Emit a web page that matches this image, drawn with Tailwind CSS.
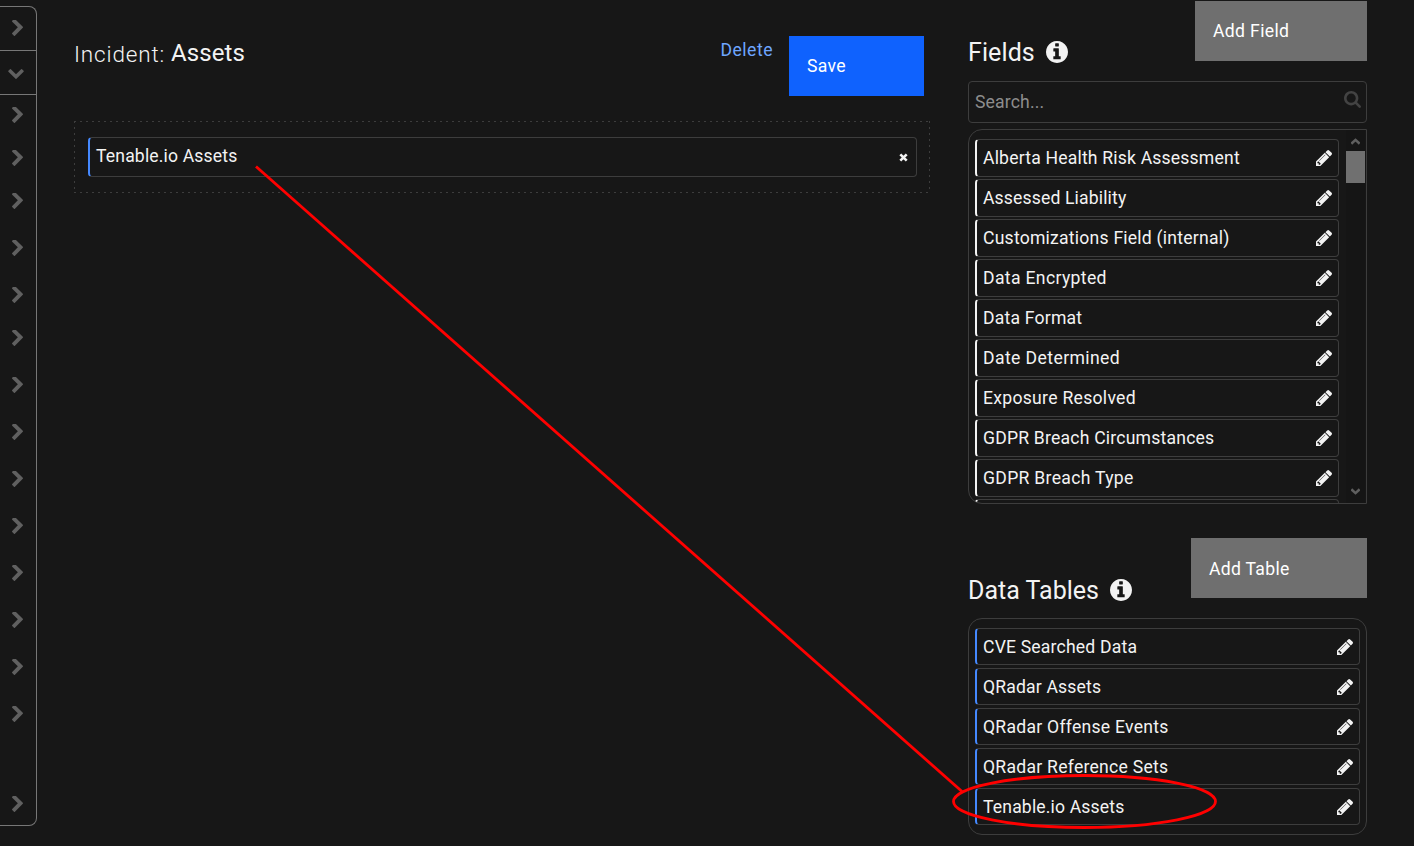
<!DOCTYPE html>
<html lang="en">
<head>
<meta charset="utf-8">
<title>Incident: Assets</title>
<script src="https://cdn.jsdelivr.net/npm/@tailwindcss/browser@4"></script>
</head>
<body class="relative h-[846px] w-[1414px] overflow-hidden bg-[#171717] font-['Roboto','Liberation_Sans',sans-serif] text-[17.6px] leading-6 text-[#f3f3f3]">
<svg class="hidden">
  <symbol id="right" viewBox="346 154 1036 1484"><path d="M1363 877l-742 742q-19 19-45 19t-45-19l-166-166q-19-19-19-45t19-45l531-531-531-531q-19-19-19-45t19-45l166-166q19-19 45-19t45 19l742 742q19 19 19 45t-19 45z"/></symbol>
  <symbol id="down" viewBox="90 533 1612 1035"><path d="M1683 808l-742 741q-19 19-45 19t-45-19l-742-741q-19-19-19-45.500t19-45.500l166-165q19-19 45-19t45 19l531 531 531-531q19-19 45-19t45 19l166 165q19 19 19 45.500t-19 45.500z"/></symbol>
  <symbol id="pencil" viewBox="128 149 1515 1515"><path d="M491 1536l91-91-235-235-91 91v107h128v128h107zm523-928q0-22-22-22-10 0-17 7l-542 542q-7 7-7 17 0 22 22 22 10 0 17-7l542-542q7-7 7-17zm-54-192l416 416-832 832h-416v-416zm683 96q0 53-37 90l-166 166-416-416 166-165q36-38 90-38 53 0 91 38l235 234q37 39 37 91z"/></symbol>
  <symbol id="info" viewBox="128 128 1536 1536"><path d="M1152 1376v-160q0-14-9-23t-23-9h-96v-512q0-14-9-23t-23-9h-320q-14 0-23 9t-9 23v160q0 14 9 23t23 9h96v320h-96q-14 0-23 9t-9 23v160q0 14 9 23t23 9h448q14 0 23-9t9-23zm-128-896v-160q0-14-9-23t-23-9h-192q-14 0-23 9t-9 23v160q0 14 9 23t23 9h192q14 0 23-9t9-23zm640 416q0 209-103 385.500t-279.500 279.500-385.500 103-385.500-103-279.500-279.500-103-385.500 103-385.500 279.500-279.500 385.500-103 385.500 103 279.500 279.500 103 385.500z"/></symbol>
  <symbol id="search" viewBox="64 128 1664 1664"><path d="M1216 832q0-185-131.500-316.500t-316.500-131.500-316.500 131.500-131.500 316.500 131.500 316.500 316.500 131.500 316.500-131.500 131.500-316.500zm512 832q0 52-38 90t-90 38q-54 0-90-38l-343-342q-179 124-399 124-143 0-273.500-55.500t-225-150-150-225-55.500-273.500 55.500-273.500 150-225 225-150 273.500-55.500 273.500 55.500 225 150 150 225 55.500 273.500q0 220-124 399l343 343q37 37 37 90z"/></symbol>
</svg>
<div class="flex h-full">
  <nav class="mt-1.5 flex h-[820px] w-[37px] shrink-0 flex-col rounded-r-lg border-y border-r border-[#777] fill-[#606060]">
    <div class="h-11 shrink-0 border-b border-[#777] pt-[13px] pl-3"><svg class="h-4 w-[11px]"><use href="#right"/></svg></div>
    <div class="h-11 shrink-0 border-b border-[#777] pt-[18px] pl-2"><svg class="h-2.5 w-4"><use href="#down"/></svg></div>
    <div class="flex flex-col pt-3 pl-3">
      <svg class="h-4 w-[11px]"><use href="#right"/></svg>
      <svg class="mt-[27px] h-4 w-[11px]"><use href="#right"/></svg>
      <svg class="mt-[27px] h-4 w-[11px]"><use href="#right"/></svg>
      <svg class="mt-[31px] h-4 w-[11px]"><use href="#right"/></svg>
      <svg class="mt-[31px] h-4 w-[11px]"><use href="#right"/></svg>
      <svg class="mt-[27px] h-4 w-[11px]"><use href="#right"/></svg>
      <svg class="mt-[31px] h-4 w-[11px]"><use href="#right"/></svg>
      <svg class="mt-[31px] h-4 w-[11px]"><use href="#right"/></svg>
      <svg class="mt-[31px] h-4 w-[11px]"><use href="#right"/></svg>
      <svg class="mt-[31px] h-4 w-[11px]"><use href="#right"/></svg>
      <svg class="mt-[31px] h-4 w-[11px]"><use href="#right"/></svg>
      <svg class="mt-[31px] h-4 w-[11px]"><use href="#right"/></svg>
      <svg class="mt-[31px] h-4 w-[11px]"><use href="#right"/></svg>
      <svg class="mt-[31px] h-4 w-[11px]"><use href="#right"/></svg>
      <svg class="mt-[74px] h-4 w-[11px]"><use href="#right"/></svg>
    </div>
  </nav>

  <main class="ml-[37px] w-[856px] shrink-0 pt-9">
    <header class="flex h-[60px] items-start pr-1.5">
      <h1 class="flex pt-px text-[24px] leading-8"><span class="mr-[7px] w-[90px] pt-px text-[22.500px] font-light tracking-[0.85px] whitespace-nowrap">Incident:</span><span class="tracking-[0.1px]">Assets</span></h1>
      <a class="mr-4 ml-auto pt-0.5 tracking-[0.5px] text-[#6ea6ff]">Delete</a>
      <button class="h-[60px] w-[135px] bg-[#0f62fe] pl-[18px] text-left tracking-[0.3px] text-white">Save</button>
    </header>
    <section class="mt-[25px] h-[72px] bg-[repeating-linear-gradient(90deg,#3d3d3d_0_2px,transparent_2px_6px),repeating-linear-gradient(90deg,#3d3d3d_0_2px,transparent_2px_6px),repeating-linear-gradient(180deg,#3d3d3d_0_2px,transparent_2px_6px),repeating-linear-gradient(180deg,#3d3d3d_0_2px,transparent_2px_6px)] [background-position:0_0,0_100%,0_0,100%_0] [background-repeat:no-repeat] [background-size:100%_1px,100%_1px,1px_100%,1px_100%] pt-4 pr-[13px] pl-3.5">
      <div class="flex h-10 items-center justify-between rounded border border-l-2 border-[#3d3d3d] border-l-[#4589ff] pr-2 pl-1.5"><span class="-mt-0.5 tracking-[0.15px]">Tenable.io Assets</span>
        <svg class="size-[9px]" viewBox="0 0 9 9"><path d="M1.300 1.300L7.700 7.700M7.700 1.300L1.300 7.700" stroke="#f3f3f3" stroke-width="2.600"/></svg></div>
    </section>
  </main>

  <aside class="ml-[38px] w-[399px] shrink-0 pt-px">
    <header class="flex h-[60px] justify-between">
      <h2 class="flex items-center gap-[10.500px] pt-[42px] text-[25px] leading-8"><span class="w-[67px] pt-0.5 tracking-[0.1px] whitespace-nowrap">Fields</span><svg class="size-[22px] fill-[#f3f3f3]"><use href="#info"/></svg></h2>
      <button class="h-[60px] w-[172px] bg-[#6f6f6f] pl-[18px] text-left tracking-[0.35px] text-white">Add Field</button>
    </header>
    <div class="mt-5 flex h-[42px] justify-between rounded border border-[#3d3d3d] pt-2 pr-[5px] pl-1.5 text-[#8d8d8d]"><span class="tracking-[0.15px]">Search...</span><svg class="mt-px size-[17px] fill-[#434343]"><use href="#search"/></svg></div>
    <div class="mt-1.5 flex h-[375px] overflow-hidden rounded-l-[14px] border border-[#3d3d3d] pl-1.5">
      <ul class="flex w-[364px] flex-col gap-0.5 pt-[9px]">
        <li class="flex h-[38px] shrink-0 items-center justify-between rounded border border-l-2 border-[#3d3d3d] border-l-[#f3f3f3] px-1.5"><span class="tracking-[0.18px]">Alberta Health Risk Assessment</span><svg class="size-4 fill-[#f3f3f3]"><use href="#pencil"/></svg></li>
        <li class="flex h-[38px] shrink-0 items-center justify-between rounded border border-l-2 border-[#3d3d3d] border-l-[#f3f3f3] px-1.5"><span class="tracking-[0.14px]">Assessed Liability</span><svg class="size-4 fill-[#f3f3f3]"><use href="#pencil"/></svg></li>
        <li class="flex h-[38px] shrink-0 items-center justify-between rounded border border-l-2 border-[#3d3d3d] border-l-[#f3f3f3] px-1.5"><span class="tracking-[0.22px]">Customizations Field (internal)</span><svg class="size-4 fill-[#f3f3f3]"><use href="#pencil"/></svg></li>
        <li class="flex h-[38px] shrink-0 items-center justify-between rounded border border-l-2 border-[#3d3d3d] border-l-[#f3f3f3] px-1.5"><span class="tracking-[0.34px]">Data Encrypted</span><svg class="size-4 fill-[#f3f3f3]"><use href="#pencil"/></svg></li>
        <li class="flex h-[38px] shrink-0 items-center justify-between rounded border border-l-2 border-[#3d3d3d] border-l-[#f3f3f3] px-1.5"><span class="tracking-[0.2px]">Data Format</span><svg class="size-4 fill-[#f3f3f3]"><use href="#pencil"/></svg></li>
        <li class="flex h-[38px] shrink-0 items-center justify-between rounded border border-l-2 border-[#3d3d3d] border-l-[#f3f3f3] px-1.5"><span class="tracking-[0.4px]">Date Determined</span><svg class="size-4 fill-[#f3f3f3]"><use href="#pencil"/></svg></li>
        <li class="flex h-[38px] shrink-0 items-center justify-between rounded border border-l-2 border-[#3d3d3d] border-l-[#f3f3f3] px-1.5"><span class="tracking-[0.28px]">Exposure Resolved</span><svg class="size-4 fill-[#f3f3f3]"><use href="#pencil"/></svg></li>
        <li class="flex h-[38px] shrink-0 items-center justify-between rounded border border-l-2 border-[#3d3d3d] border-l-[#f3f3f3] px-1.5"><span class="tracking-[0.2px]">GDPR Breach Circumstances</span><svg class="size-4 fill-[#f3f3f3]"><use href="#pencil"/></svg></li>
        <li class="flex h-[38px] shrink-0 items-center justify-between rounded border border-l-2 border-[#3d3d3d] border-l-[#f3f3f3] px-1.5"><span class="tracking-[0.3px]">GDPR Breach Type</span><svg class="size-4 fill-[#f3f3f3]"><use href="#pencil"/></svg></li>
        <li class="h-[38px] shrink-0 rounded border border-l-2 border-[#3d3d3d] border-l-[#f3f3f3]"></li>
      </ul>
      <div class="ml-[7px] flex w-[19px] flex-col items-center justify-between bg-[#151515] pb-2">
        <div class="flex w-full flex-col items-center"><svg class="mt-2 h-[7px] w-[9px]" viewBox="0 0 9 7"><path d="M0.300 5.700L4.500 1.900L8.700 5.700" fill="none" stroke="#5f5f5f" stroke-width="2.600"/></svg><div class="mt-1.5 h-8 w-full bg-[#707070]"></div></div>
        <svg class="h-[7px] w-[9px]" viewBox="0 0 9 7"><path d="M0.300 1.300L4.500 5.100L8.700 1.300" fill="none" stroke="#5f5f5f" stroke-width="2.600"/></svg>
      </div>
    </div>

    <header class="mt-[34px] flex h-[60px] justify-between">
      <h2 class="flex items-center gap-[10.500px] pt-[44px] text-[25px] leading-8"><span class="w-[131px] pt-0.5 whitespace-nowrap">Data Tables</span><svg class="size-[22px] fill-[#f3f3f3]"><use href="#info"/></svg></h2>
      <button class="h-[60px] w-[176px] bg-[#6f6f6f] pt-0.5 pl-[18px] text-left tracking-[0.3px] text-white">Add Table</button>
    </header>
    <ul class="mt-5 flex h-[217px] flex-col gap-[3px] rounded-[14px] border border-[#3d3d3d] px-1.5 pt-[9px]">
      <li class="flex h-[37px] items-center justify-between rounded border border-l-2 border-[#3d3d3d] border-l-[#4589ff] px-1.5"><span class="tracking-[0.18px]">CVE Searched Data</span><svg class="size-4 fill-[#f3f3f3]"><use href="#pencil"/></svg></li>
      <li class="flex h-[37px] items-center justify-between rounded border border-l-2 border-[#3d3d3d] border-l-[#4589ff] px-1.5"><span class="tracking-[0.16px]">QRadar Assets</span><svg class="size-4 fill-[#f3f3f3]"><use href="#pencil"/></svg></li>
      <li class="flex h-[37px] items-center justify-between rounded border border-l-2 border-[#3d3d3d] border-l-[#4589ff] px-1.5"><span class="tracking-[0.25px]">QRadar Offense Events</span><svg class="size-4 fill-[#f3f3f3]"><use href="#pencil"/></svg></li>
      <li class="flex h-[37px] items-center justify-between rounded border border-l-2 border-[#3d3d3d] border-l-[#4589ff] px-1.5"><span class="tracking-[0.25px]">QRadar Reference Sets</span><svg class="size-4 fill-[#f3f3f3]"><use href="#pencil"/></svg></li>
      <li class="flex h-[37px] items-center justify-between rounded border border-l-2 border-[#3d3d3d] border-l-[#4589ff] px-1.5"><span class="tracking-[0.15px]">Tenable.io Assets</span><svg class="size-4 fill-[#f3f3f3]"><use href="#pencil"/></svg></li>
    </ul>
  </aside>
</div>
<!-- Annotation linking the table to its place in the layout -->
<svg class="pointer-events-none absolute inset-0 h-[846px] w-[1414px]" fill="none" stroke="#f00" stroke-width="2.800"><path d="M256 166.500L962 791.500"/><ellipse cx="1084.500" cy="801.500" rx="131" ry="26"/></svg>
</body>
</html>
